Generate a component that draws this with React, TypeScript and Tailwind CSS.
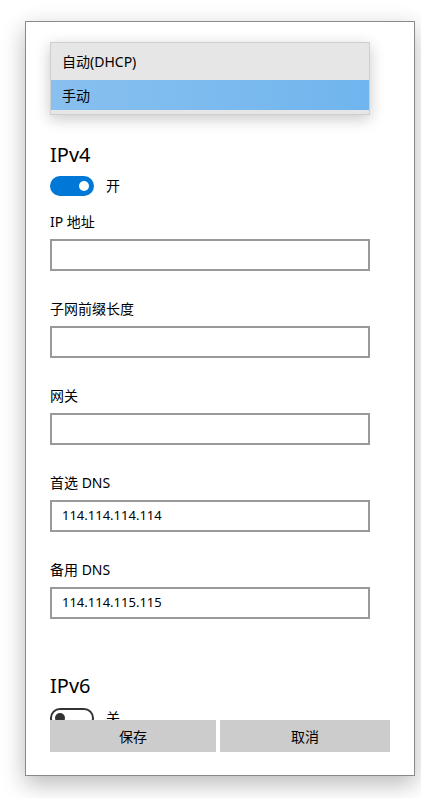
import React from "react";

const fields = [
  { label: "IP 地址", value: "" },
  { label: "子网前缀长度", value: "" },
  { label: "网关", value: "" },
  { label: "首选 DNS", value: "114.114.114.114" },
  { label: "备用 DNS", value: "114.114.115.115" },
];

function Toggle({ on }: { on: boolean }) {
  if (on) {
    return (
      <div className="flex h-[20px] w-[44px] items-center justify-end rounded-full bg-[#0078d7] pr-[5px]">
        <div className="h-[10px] w-[10px] rounded-full bg-white" />
      </div>
    );
  }
  return (
    <div className="flex h-[20px] w-[44px] items-center rounded-full border-2 border-[#333333] pl-[3px]">
      <div className="h-[10px] w-[10px] rounded-full bg-[#333333]" />
    </div>
  );
}

export default function App() {
  return (
    <div className="min-h-screen bg-white font-['Noto_Sans','Noto_Sans_CJK_SC',sans-serif] text-black">
      <div className="pl-[25px] pt-[21px]">
        <div className="relative flex h-[755px] w-[390px] flex-col border border-[#8a8a8a] bg-white shadow-[0_8px_22px_rgba(0,0,0,0.28)]">
          {/* scrolling settings area */}
          <div className="flex-1 overflow-hidden pl-[24px] pt-[119px]">
            <div className="text-[20px] leading-[28px]">IPv4</div>
            <div className="mt-[7px] flex items-center gap-[12px]">
              <Toggle on />
              <span className="text-[14px] leading-[20px]">开</span>
            </div>

            <div className="mt-[16px]">
              {fields.map((f, i) => (
                <div key={f.label} className={i > 0 ? "mt-[28px]" : ""}>
                  <div className="text-[14px] leading-[20px]">{f.label}</div>
                  <div className="mt-[7px] flex h-[32px] w-[320px] items-center border-2 border-[#999999] pl-[10px] text-[13px]">
                    {f.value}
                  </div>
                </div>
              ))}
            </div>

            <div className="mt-[53px] text-[20px] leading-[28px]">IPv6</div>
            <div className="mt-[8px] flex items-center gap-[12px]">
              <Toggle on={false} />
              <span className="text-[14px] leading-[20px]">关</span>
            </div>
          </div>

          {/* footer buttons */}
          <div className="flex gap-[4px] pb-[23px] pl-[24px]">
            <button className="h-[32px] w-[166px] bg-[#cccccc] text-[14px]">保存</button>
            <button className="h-[32px] w-[170px] bg-[#cccccc] text-[14px]">取消</button>
          </div>

          {/* open dropdown menu */}
          <div className="absolute left-[24px] top-[20px] w-[320px] border border-[#cfcfcf] bg-[#e6e6e6] pb-[4px] shadow-[0_4px_14px_rgba(0,0,0,0.22)]">
            <div className="flex h-[37px] items-center pl-[11px] text-[14px]">自动(DHCP)</div>
            <div className="flex h-[30px] items-center bg-gradient-to-r from-[#88c0ef] to-[#70b5ee] pl-[11px] text-[14px]">
              手动
            </div>
          </div>
        </div>
      </div>
    </div>
  );
}
